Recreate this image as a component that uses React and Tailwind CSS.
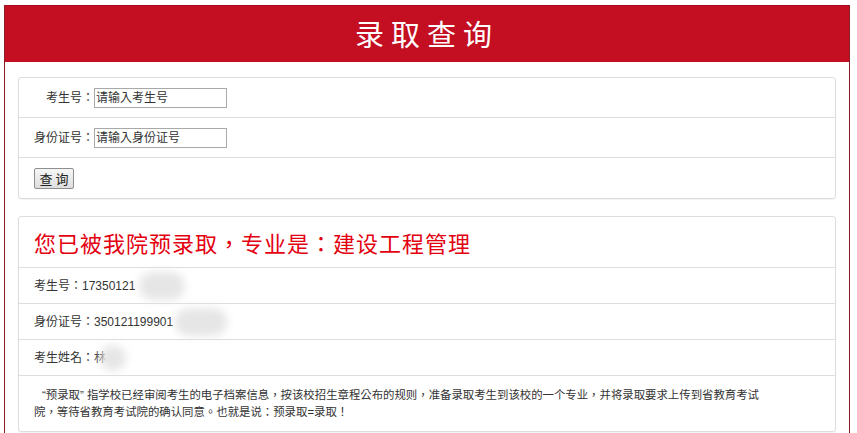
import React from 'react';

const font = "font-['Liberation_Sans','Noto_Sans_CJK_TC',sans-serif]";

// small blurred mask over private data
const Blur = ({ w, h = 22, className = '' }) => (
  <span
    className={`inline-block align-middle bg-[#e6e6e6] rounded-full blur-[4px] ${className}`}
    style={{ width: w, height: h }}
  />
);

const FormRow = ({ label, placeholder, last }) => (
  <div className={`h-10 flex items-center pl-[15px] ${last ? '' : 'border-b border-[#dddddd]'}`}>
    <span className="w-[60px] text-right text-[12px] text-[#333]">{label}</span>
    <input
      type="text"
      placeholder={placeholder}
      className="w-[133px] h-[20px] border border-[#a9a9a9] px-[1px] text-[12px] text-[#333] placeholder:text-[#333] outline-none"
    />
  </div>
);

const InfoRow = ({ children }) => (
  <div className="h-9 flex items-center pl-[15px] border-b border-[#dddddd] text-[12px] text-[#333]">
    {children}
  </div>
);

export default function App() {
  return (
    <div className={`bg-white w-[857px] h-[433px] overflow-hidden pt-[5px] pl-[4px] ${font}`}>
      <div className="w-[846px] h-[428px] border-x border-[#8a1c24]">
        <div className="h-[57px] bg-[#c40e22] border-t border-[#a80c1e] flex items-center justify-center">
          <h1 className="text-white text-[29px] tracking-[7px] font-['Noto_Sans_CJK_SC',sans-serif]">录取查询</h1>
        </div>

        <div className="px-[13px] pt-[15px]">
          <div className="border border-[#dddddd] rounded-[3px] shadow-[0_1px_1px_rgba(0,0,0,0.05)]">
            <FormRow label="考生号：" placeholder="请输入考生号" />
            <FormRow label="身份证号：" placeholder="请输入身份证号" />
            <div className="h-10 flex items-center pl-[15px]">
              <button className="w-[40px] h-[21px] border border-[#8f8f8f] rounded-[2px] bg-gradient-to-b from-[#f6f6f6] to-[#dedede] text-[13px] text-[#222] leading-none font-['Noto_Sans_CJK_SC',sans-serif]">
                查 询
              </button>
            </div>
          </div>

          <div className="mt-[17px] border border-[#dddddd] rounded-[3px] shadow-[0_1px_1px_rgba(0,0,0,0.05)]">
            <div className="h-[51px] flex items-center pl-[15px] border-b border-[#dddddd]">
              <span className="text-[22px] tracking-[1px] text-[#e3000f] font-['Noto_Sans_CJK_TC',sans-serif]">
                您已被我院预录取，专业是：建设工程管理
              </span>
            </div>
            <InfoRow>
              <span>考生号：17350121</span>
              <Blur w={46} h={28} className="ml-[4px]" />
            </InfoRow>
            <InfoRow>
              <span>身份证号：350121199901</span>
              <Blur w={52} h={28} className="ml-[2px]" />
            </InfoRow>
            <InfoRow>
              <span>考生姓名：林</span>
              <Blur w={26} h={26} className="-ml-[6px]" />
            </InfoRow>
            <div className="pt-[11px] pb-[10px] pl-[15px] pr-[10px] text-[11.4px] leading-[17px] text-[#333] whitespace-nowrap">
              <div className="pl-[8px]">“预录取” 指学校已经审阅考生的电子档案信息，按该校招生章程公布的规则，准备录取考生到该校的一个专业，并将录取要求上传到省教育考试</div>
              <div>院，等待省教育考试院的确认同意。也就是说：预录取=录取！</div>
            </div>
          </div>
        </div>
      </div>
    </div>
  );
}
